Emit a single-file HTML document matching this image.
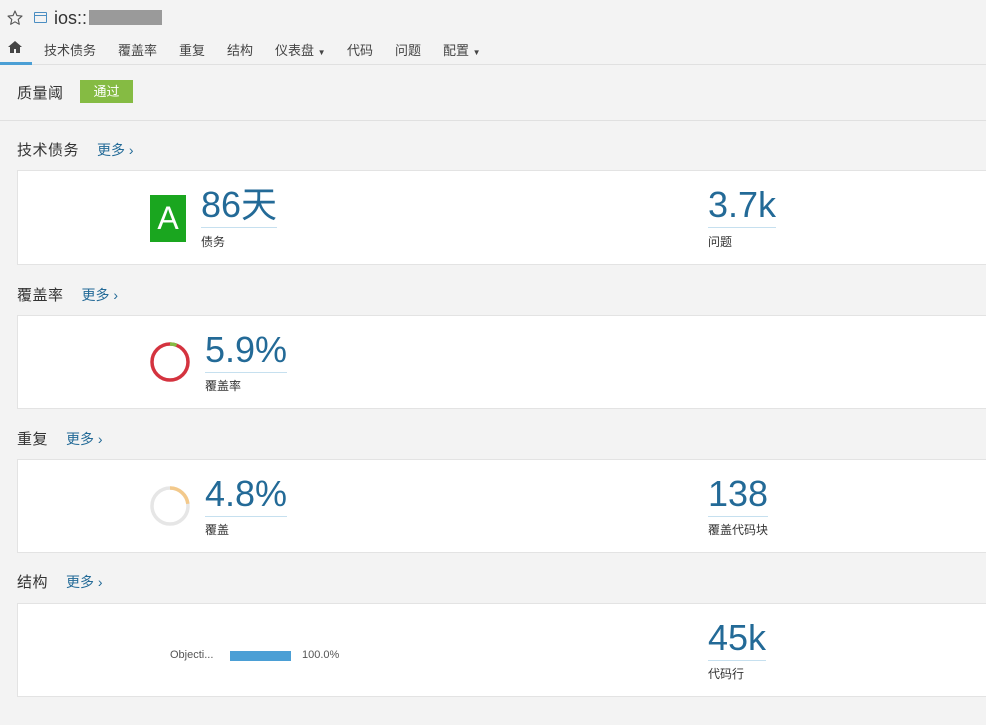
<!DOCTYPE html>
<html><head><meta charset="utf-8"><style>
body{margin:0;background:#f3f3f3;font-family:"Liberation Sans","Noto Sans CJK SC",sans-serif;color:#444;width:986px;height:725px;overflow:hidden;position:relative}
.a{position:absolute}
.nav span{position:absolute;top:40px;font-size:13px;color:#444}
.card{position:absolute;left:17px;width:980px;background:#fff;border:1px solid #e3e3e3;box-sizing:border-box}
.h{position:absolute;left:17px;font-size:15px;color:#333;letter-spacing:0.5px}
.h b{font-weight:normal;color:#236a97;font-size:14px;margin-left:18px;letter-spacing:0}
.num{position:absolute;font-size:36px;color:#236a97;line-height:40px;border-bottom:1px solid #c6e0ef;padding-bottom:2px}
.lbl{position:absolute;font-size:12px;color:#333}
</style></head><body>
<svg class="a" style="left:7px;top:10px" width="16" height="16" viewBox="0 0 16 16"><path d="M8 1l2 4.6 5 .5-3.8 3.3 1.1 4.9L8 11.8 3.7 14.3l1.1-4.9L1 6.1l5-.5z" fill="none" stroke="#555" stroke-width="1.1" stroke-linejoin="round"/></svg>
<div class="a" style="left:34px;top:12px;width:13px;height:11px;border:1.3px solid #4b8ec2;border-radius:1px;box-sizing:border-box"></div>
<div class="a" style="left:34px;top:15px;width:13px;height:1.3px;background:#4b8ec2"></div>
<div class="a" style="left:54px;top:8px;font-size:18px;color:#333">ios::</div>
<div class="a" style="left:89px;top:10px;width:73px;height:15px;background:#9a9a9a"></div>
<div class="nav">
<svg class="a" style="left:8px;top:41px" width="14" height="12" viewBox="0 0 14 12"><path d="M7 0L0 6h2v6h4V8h2v4h4V6h2z" fill="#444"/></svg>
<span style="left:44px">技术债务</span><span style="left:118px">覆盖率</span><span style="left:179px">重复</span><span style="left:227px">结构</span><span style="left:275px">仪表盘 <small style="font-size:8px">▼</small></span><span style="left:347px">代码</span><span style="left:395px">问题</span><span style="left:443px">配置 <small style="font-size:8px">▼</small></span>
</div>
<div class="a" style="left:0;top:64px;width:986px;height:1px;background:#e0e0e0"></div>
<div class="a" style="left:0;top:62px;width:32px;height:3px;background:#4b9fd5"></div>
<div class="a" style="left:17px;top:82px;font-size:15px;color:#333;letter-spacing:0.5px">质量阈</div>
<div class="a" style="left:80px;top:80px;width:53px;height:23px;background:#85bb43;color:#fff;font-size:13px;line-height:23px;text-align:center">通过</div>
<div class="a" style="left:0;top:120px;width:986px;height:1px;background:#e0e0e0"></div>

<div class="h" style="top:139px">技术债务<b>更多 ›</b></div>
<div class="card" style="top:170px;height:95px"></div>
<div class="a" style="left:150px;top:195px;width:36px;height:47px;background:#1aa61f;color:#fff;font-size:32px;text-align:center;line-height:47px">A</div>
<div class="num" style="left:201px;top:185px">86天</div>
<div class="lbl" style="left:201px;top:233px">债务</div>
<div class="num" style="left:708px;top:185px">3.7k</div>
<div class="lbl" style="left:708px;top:233px">问题</div>

<div class="h" style="top:284px">覆盖率<b>更多 ›</b></div>
<div class="card" style="top:315px;height:94px"></div>
<svg class="a" style="left:149px;top:341px" width="42" height="42"><circle cx="21" cy="21" r="18" fill="none" stroke="#d4333f" stroke-width="3.5"/><circle cx="21" cy="21" r="18" fill="none" stroke="#85bb43" stroke-width="3.5" stroke-dasharray="6.7 200" transform="rotate(-90 21 21)"/></svg>
<div class="num" style="left:205px;top:330px">5.9%</div>
<div class="lbl" style="left:205px;top:377px">覆盖率</div>

<div class="h" style="top:428px">重复<b>更多 ›</b></div>
<div class="card" style="top:459px;height:94px"></div>
<svg class="a" style="left:149px;top:485px" width="42" height="42"><circle cx="21" cy="21" r="18" fill="none" stroke="#e6e6e6" stroke-width="3.5"/><circle cx="21" cy="21" r="18" fill="none" stroke="#f3c98b" stroke-width="3.5" stroke-dasharray="26 200" transform="rotate(-90 21 21)"/></svg>
<div class="num" style="left:205px;top:474px">4.8%</div>
<div class="lbl" style="left:205px;top:521px">覆盖</div>
<div class="num" style="left:708px;top:474px">138</div>
<div class="lbl" style="left:708px;top:521px">覆盖代码块</div>

<div class="h" style="top:571px">结构<b>更多 ›</b></div>
<div class="card" style="top:603px;height:94px"></div>
<div class="a" style="left:170px;top:649px;font-size:11px;color:#555">Objecti...</div>
<div class="a" style="left:230px;top:651px;width:61px;height:10px;background:#4b9fd5"></div>
<div class="a" style="left:302px;top:649px;font-size:11px;color:#555">100.0%</div>
<div class="num" style="left:708px;top:618px">45k</div>
<div class="lbl" style="left:708px;top:665px">代码行</div>
</body></html>
